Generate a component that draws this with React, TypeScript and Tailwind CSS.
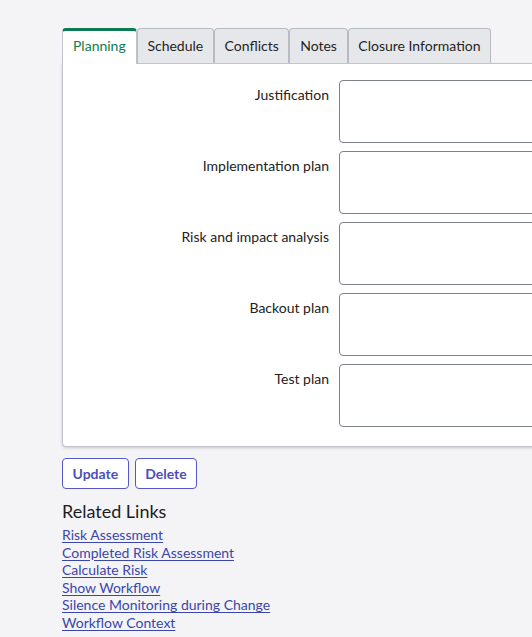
import React from "react";

const tabs = ["Planning", "Schedule", "Conflicts", "Notes", "Closure Information"];

const fields = [
  "Justification",
  "Implementation plan",
  "Risk and impact analysis",
  "Backout plan",
  "Test plan",
];

const links = [
  "Risk Assessment",
  "Completed Risk Assessment",
  "Calculate Risk",
  "Show Workflow",
  "Silence Monitoring during Change",
  "Workflow Context",
];

export default function App() {
  return (
    <div
      className="w-[532px] h-[637px] overflow-hidden bg-[#f4f4f6] text-[#1d1d1f]"
      style={{ fontFamily: "Lato, 'Open Sans', sans-serif" }}
    >
      <div className="pl-[62px] pt-[28px] w-[640px]">
        {/* tab strip */}
        <div className="flex items-end h-[35px]">
          {tabs.map((t, i) =>
            i === 0 ? (
              <div
                key={t}
                className="relative z-10 h-[36px] -mb-px px-[10px] bg-white border border-[#c2c4cc] border-b-0 border-t-[3px] border-t-[#0b7a52] rounded-t-[4px] text-[14px] leading-[30px] text-[#137a50]"
              >
                {t}
              </div>
            ) : (
              <div
                key={t}
                className="h-[35px] px-[9.7px] bg-[#e6e7eb] border border-[#b8bbc3] border-b-0 rounded-t-[4px] text-[14px] leading-[34px] text-[#1f1f22]"
              >
                {t}
              </div>
            )
          )}
        </div>

        {/* tab panel */}
        <div className="w-[560px] bg-white border border-[#c2c4cc] rounded-b-[4px] shadow-[0_1px_3px_rgba(0,0,0,0.18)] pt-[16px] pb-[19px]">
          <div className="flex flex-col gap-[8px]">
            {fields.map((f) => (
              <div key={f} className="flex items-start">
                <label className="w-[276px] shrink-0 pr-[10px] text-right text-[14px] leading-[20px] pt-[5px] text-[#222]">
                  {f}
                </label>
                <textarea className="w-[280px] h-[63px] resize-none border border-[#7d818c] rounded-[4px] bg-white" />
              </div>
            ))}
          </div>
        </div>

        {/* actions */}
        <div className="flex gap-[6px] mt-[11px]">
          <button className="h-[31px] px-[9.5px] border border-[#5457c4] rounded-[4px] bg-white text-[14px] font-bold text-[#4b4fb8]">
            Update
          </button>
          <button className="h-[31px] px-[9.5px] border border-[#5457c4] rounded-[4px] bg-white text-[14px] font-bold text-[#4b4fb8]">
            Delete
          </button>
        </div>

        {/* related links */}
        <div className="mt-[10px]">
          <h2 className="text-[18px] leading-[24px] text-[#1d1d1f]">Related Links</h2>
          <ul className="mt-[3px] text-[14px] leading-[17.6px]">
            {links.map((l) => (
              <li key={l}>
                <a href="#" className="text-[#3b46ab] underline underline-offset-[2px]">
                  {l}
                </a>
              </li>
            ))}
          </ul>
        </div>
      </div>
    </div>
  );
}
